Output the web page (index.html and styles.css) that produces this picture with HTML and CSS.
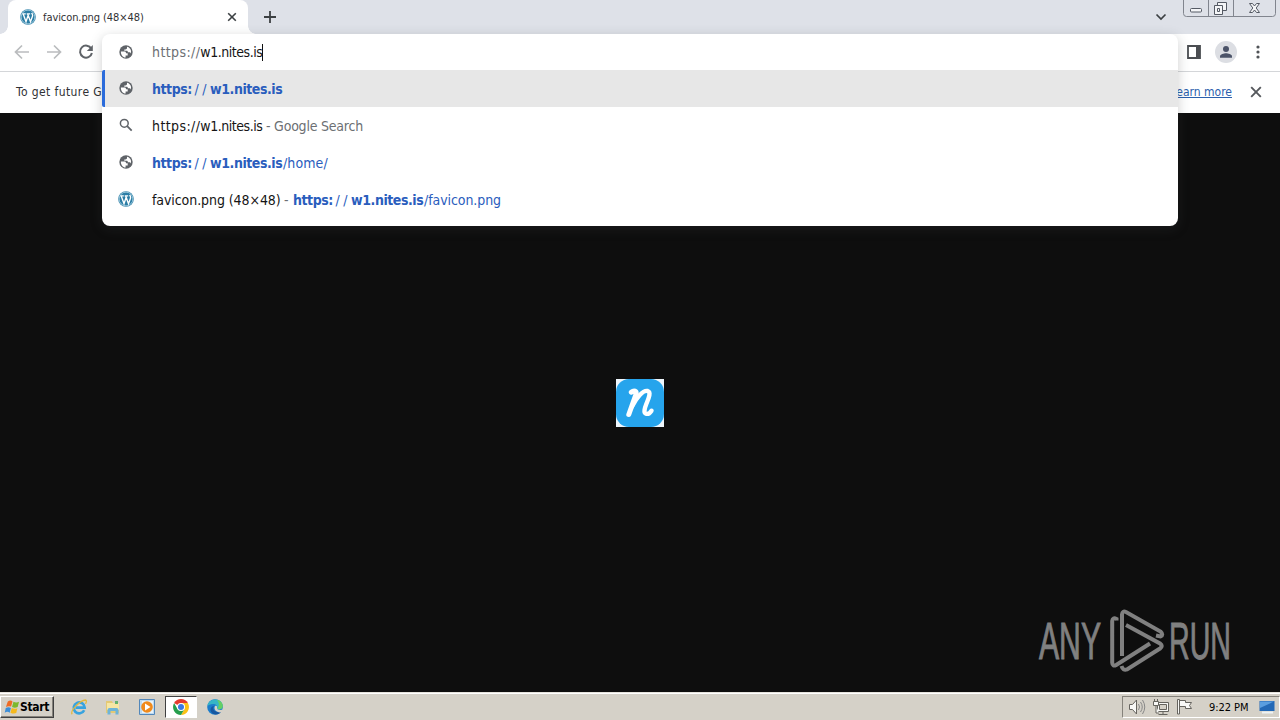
FILE: index.html
```html
<!DOCTYPE html>
<html lang="en">
<head>
<meta charset="utf-8">
<title>favicon.png (48×48)</title>
<link rel="stylesheet" href="styles.css">
</head>
<body>
<svg class="defs" width="0" height="0">
  <symbol id="globe" viewBox="0 0 16 16">
    <circle cx="8" cy="8" r="6.700" fill="#5f6368"/>
    <path d="M2.900 7.400h3.200c1.600 0 1.900.6 1.900 1.800h1.700v2.300H7.600v1.900C4.800 13.400 2.700 10.700 2.900 7.400ZM9 2.800v1.300c0 .9-.7 1.400-1.600 1.400H6.300v1.300h2.200c1 0 1.300.5 1.300 1.400h1.600c.9 0 1.300.5 1.300 1.500 1.300-3.100-.6-6.200-3.700-6.900Z" fill="#fff"/>
  </symbol>
  <symbol id="wp" viewBox="0 0 16 16">
    <circle cx="8" cy="8" r="7.800" fill="#2b7da5"/>
    <circle cx="8" cy="8" r="6.900" fill="none" stroke="#b9dcea" stroke-width=".8"/>
    <path d="M2.300 4.800h3.500M6.700 4.800h3.500M3.200 5l2.800 7.700L8 6.700M7.700 5l2.800 7.700 2-5.500c.6-1.600-.5-2-.7-3.400" fill="none" stroke="#fff" stroke-width="1.350"/>
  </symbol>
</svg>

<header class="tabstrip">
  <div class="tab">
    <svg class="i16" viewBox="0 0 16 16"><use href="#wp"/></svg>
    <span class="tab-title">favicon.png (48×48)</span>
    <svg class="tab-close" viewBox="0 0 10 10"><path d="M1.200 1.200l7.600 7.600M8.800 1.200L1.200 8.800" stroke="#3c4043" stroke-width="1.600"/></svg>
  </div>
  <svg class="newtab" viewBox="0 0 12 12"><path d="M6 0v12M0 6h12" stroke="#3c4043" stroke-width="1.800"/></svg>
  <svg class="chevron" viewBox="0 0 12 8"><path d="M1.500 1.500L6 6l4.500-4.500" fill="none" stroke="#3c4043" stroke-width="1.700"/></svg>
  <svg class="winctl" viewBox="0 0 93 18"><path d="M.5 0v13.500q0 3 3 3h86q3 0 3-3V0M25.500 0v16M50.500 0v16" fill="none" stroke="#81858e"/><g fill="#f4f5f7" stroke="#555a64"><rect x="7.500" y="8.500" width="11" height="3.500" rx="1"/><path d="M34.500 2.500h9v8h-9Z"/><path d="M31.500 5.500h8v9h-8Z"/><path d="M34.500 8.500h2v3h-2Z"/><path d="M66.500 3.500h3l2 2.500 2-2.500h3l-3.300 4.500 3.300 4.500h-3l-2-2.500-2 2.500h-3L69.800 8Z"/></g></svg>
</header>

<div class="toolbar">
  <svg class="i16" viewBox="0 0 16 16"><path d="M15 8H2M8 1.500L1.500 8 8 14.500" fill="none" stroke="#babcbe" stroke-width="1.700"/></svg>
  <svg class="i16 fwd" viewBox="0 0 16 16"><path d="M1 8h13M8 1.500L14.500 8 8 14.500" fill="none" stroke="#babcbe" stroke-width="1.700"/></svg>
  <svg class="i16 reload" viewBox="0 0 16 16"><path d="M13.300 4.700A6 6 0 1 0 13.900 9" fill="none" stroke="#5f6368" stroke-width="2"/><path d="M14.800 1v6H8.800Z" fill="#5f6368"/></svg>
  <span class="spacer"></span>
  <svg class="panel" viewBox="0 0 14 14"><path d="M1 1h12v12H1Z" fill="none" stroke="#4b4e52" stroke-width="1.800"/><path d="M9 1h4v12H9Z" fill="#4b4e52"/></svg>
  <svg class="avatar" viewBox="0 0 22 22"><circle cx="11" cy="11" r="11" fill="#dcdee3"/><circle cx="11" cy="8" r="3" fill="#4b5368"/><path d="M5 16.800v-1.500c0-2 4-3 6-3s6 1 6 3v1.500Z" fill="#4b5368"/></svg>
  <svg class="dots" viewBox="0 0 4 14"><g fill="#505357"><circle cx="2" cy="2" r="1.600"/><circle cx="2" cy="7" r="1.600"/><circle cx="2" cy="12" r="1.600"/></g></svg>
</div>

<div class="infobar">
  <span class="info-text">To get future G</span>
  <span class="spacer"></span>
  <a class="learn">Learn more</a>
  <svg class="info-close" viewBox="0 0 12 12"><path d="M1.200 1.200l9.600 9.600M10.800 1.200L1.200 10.800" stroke="#55585c" stroke-width="1.900"/></svg>
</div>

<main class="viewer">
  <svg class="nlogo" viewBox="0 0 48 48"><path d="M0 0h48v48H0Z" fill="#eef6fc"/><rect width="48" height="48" rx="13" fill="#26a4ec"/><path d="M15.200 13.200c2.800-2.200 5.800-1.500 4.700 2.300L12.800 35.500" fill="none" stroke="#fff" stroke-width="5" stroke-linecap="round" stroke-linejoin="round"/><path d="M16 27.500C20.500 18.500 27 10.800 31.700 12c3.800 1.200.7 7.800-1.300 12.800-1.500 3.900-3.200 8.900-.5 9.900 2.200.7 4.300-1 5.600-3" fill="none" stroke="#fff" stroke-width="4.400" stroke-linecap="round"/></svg>
  <div class="watermark">
    <span class="wm-text wm-any">ANY</span>
    <svg class="wm-play" viewBox="0 0 56 64"><path d="M7.500 11.500V10q-3.800-2-4.300 2v41.500q.3 4.500 4 2.500L41 34.500M13 47V5.500q.5-4 4-2.500L51.500 22.500q3.500 3.500 0 5l-4.500-1M17 16l34 18.500q3.500 2.500 0 5L18 60.500q-4 1.500-5.500-3.500" fill="none" stroke="#808080" stroke-width="4"/></svg>
    <span class="wm-text wm-run">RUN</span>
  </div>
</main>

<footer class="taskbar">
  <div class="start">
    <svg class="flag" viewBox="0 0 16 16"><path d="M3 2q3-2 5 0L6.500 7.500q-3-1-5.500.5Z" fill="#ef6b24"/><path d="M9 2.500q3 1.500 6 0L13.500 8q-3 1.500-6 0Z" fill="#7cb82d"/><path d="M.8 9q3-1.500 5.500 0L5 14q-2.500-2-5.300 0Z" fill="#3c8ed8"/><path d="M7.200 9q3 1.500 6 .2L12 14.500q-3 1-6.200-.5Z" fill="#f5b91d"/></svg>
    <b>Start</b>
  </div>
  <div class="task"><svg class="i16" viewBox="0 0 16 16"><path d="M13.200 11.200A5.500 5.500 0 1 1 13.700 8.600H4.500" fill="none" stroke="#37a3df" stroke-width="2.600"/><path d="M1.200 15.200C-1.500 12.500 9 1.200 14.500 1c1.500.3.800 2.500 0 3.800" fill="none" stroke="#e3b83c" stroke-width="1.300"/></svg></div>
  <div class="task"><svg class="i16" viewBox="0 0 16 16"><path d="M1 2h6l1 2h6v10H1Z" fill="#e4c974"/><path d="M2 4h12v7H2Z" fill="#f6e6a4"/><path d="M2.500 15.500V11q0-2 2-2h7q2 0 2 2v4.500h-3V12h-5v3.500Z" fill="#6eb4d8"/><path d="M10 2h3v3h-3Z" fill="#65b16e"/></svg></div>
  <div class="task"><svg class="i16" viewBox="0 0 16 16"><path d="M.5.500h15v15H.5Z" fill="#bddaf1" stroke="#5287ba"/><path d="M3 2h11v12H3Z" fill="#e8f3fb"/><circle cx="8" cy="8" r="5.800" fill="#f08a1c"/><path d="M6 4.500 11.500 8 6 11.500Z" fill="#fff"/></svg></div>
  <div class="task active"><svg class="i16" viewBox="0 0 16 16"><path d="M8 8 1.100 4A8 8 0 0 1 14.900 4Z" fill="#e33b2e"/><path d="M8 8V4h6.900A8 8 0 0 1 8 16l3.500-6Z" fill="#fbc116"/><path d="M8 8l3.500 2L8 16A8 8 0 0 1 1.100 4L4.500 10Z" fill="#269e4d"/><circle cx="8" cy="8" r="4" fill="#fff"/><circle cx="8" cy="8" r="3" fill="#3979e3"/></svg></div>
  <div class="task"><svg class="i16" viewBox="0 0 16 16"><circle cx="8" cy="8" r="7.800" fill="#1b7ccb"/><path d="M.5 7C1.500-2 15-1.500 15.800 6.800c0 3-3 4.500-5.800 3.200 1-3-1-5-4-5-2.500 0-4.500 1-5.500 2Z" fill="#36b5c5"/><path d="M10 .8c4 1 6 4 5.800 6.500 0 2.500-3 3.500-5.500 2.500C13 6 12 4 10 .8Z" fill="#65cf65"/><path d="M7 7c-2 3 0 7 7.500 5.500-2 3-7 4-9.500 1.500C2 11 4 7 7 7Z" fill="#1757a0"/><path d="M8 7c1.500-.5 2.500.5 2 2 0 2 3 2.500 6.500 1.500l-1.500 2.500c-2 1-4 .5-6-1C7.500 11 7 8.500 8 7Z" fill="#d5d1c8"/></svg></div>
  <span class="spacer"></span>
  <div class="tray">
    <svg class="tray-icons" viewBox="0 0 68 18"><g fill="#f8f8f6" stroke="#66645f"><path d="M1.500 6.500h3L8.500 2v14l-4-4.500h-3Z"/><path d="M10.500 6q2 3 0 6M12.500 4q3.500 5 0 10M14.500 2q4.500 7 0 14" fill="none" stroke="#888"/><path d="M29.500 4.500h11v9h-11ZM30.500 16.500h9M35 13.500v3"/><path d="M31.500 6.500h7v5h-7Z" fill="#d5d1c8"/><path d="M26.500 1v3M29.500 1v3M25.500 3.500h5v4h-5ZM28 7.500v7.500h3"/><path d="M49.500 16V1.500h2V16ZM51.500 2.500h6v2h6l-2 3 2 3h-6v-2h-6Z"/></g></svg>
    <time class="clock">9:22 PM</time>
    <svg class="i16 desk" viewBox="0 0 16 16"><path d="M.5 2h15v10H.5Z" fill="#2469b6"/><path d="M1 2.500h14L1 9Z" fill="#5a9ee0"/><path d="M3 13.500h11" stroke="#edf2f5" stroke-width="2"/></svg>
  </div>
</footer>

<section class="omnibox">
  <div class="row input"><svg class="i16" viewBox="0 0 16 16"><use href="#globe"/></svg><span class="t t-input"><span class="grey scheme">https://</span>w1.nites.is</span><i class="caret"></i></div>
  <div class="row selected"><svg class="i16" viewBox="0 0 16 16"><use href="#globe"/></svg><b class="t url w130">https:<span class="thin">//</span>w1.nites.is</b></div>
  <div class="row"><svg class="i16" viewBox="0 0 16 16"><circle cx="6.300" cy="6.300" r="3.900" fill="none" stroke="#5f6368" stroke-width="1.500"/><path d="M9.200 9.200l4.500 4.500" stroke="#5f6368" stroke-width="1.800"/></svg><span class="t t-search"><span class="scheme">https://</span>w1.nites.is</span><span class="t grey t-google">- Google Search</span></div>
  <div class="row"><svg class="i16" viewBox="0 0 16 16"><use href="#globe"/></svg><b class="t url w130">https:<span class="thin">//</span>w1.nites.is</b><span class="t url t-home">/home/</span></div>
  <div class="row"><svg class="i16" viewBox="0 0 16 16"><use href="#wp"/></svg><span class="t t-fav">favicon.png (48×48)</span><span class="t grey t-dash">-</span><b class="t url w130">https:<span class="thin">//</span>w1.nites.is</b><span class="t url t-path">/favicon.png</span></div>
</section>
</body>
</html>
```
FILE: styles.css
```css
* { box-sizing: border-box; }
body { margin: 0; width: 1280px; height: 720px; overflow: hidden; display: flex; flex-direction: column; background: #0e0e0e; font-family: "DejaVu Sans Condensed", "DejaVu Sans", sans-serif; font-stretch: condensed; font-size: 11px; color: #303134; }
svg { display: block; flex: none; overflow: visible; }
.defs { position: absolute; }
.i16 { width: 16px; height: 16px; }
.spacer { flex: 1; }

.tabstrip { height: 34px; flex: none; display: flex; align-items: flex-start; background: #dee1e8; }
.tab { position: relative; width: 240px; height: 34px; margin-left: 8px; padding: 0 11px 0 12px; display: flex; align-items: center; background: #fff; border-radius: 8px 8px 0 0; }
.tab::before, .tab::after { content: ""; position: absolute; bottom: 0; width: 8px; height: 8px; }
.tab::before { left: -8px; background: radial-gradient(circle at 0 0, transparent 7.5px, #fff 8px); }
.tab::after { right: -8px; background: radial-gradient(circle at 100% 0, transparent 7.5px, #fff 8px); }
.tab-title { margin-left: 7px; white-space: nowrap; letter-spacing: -.08px; }
.tab-close { width: 10px; height: 10px; margin-left: auto; }
.newtab { width: 12px; height: 12px; margin: 11px 0 0 16px; }
.chevron { width: 12px; height: 8px; margin: 13px 16px 0 auto; }
.winctl { width: 93px; height: 18px; margin-right: 4px; }

.toolbar { height: 38px; flex: none; display: flex; align-items: center; padding: 0 20px 1px 14px; background: #fff; border-bottom: 1px solid #d4d6d9; }
.fwd, .reload { margin-left: 16px; }
.panel { width: 14px; height: 14px; margin-right: 14px; }
.avatar { width: 22px; height: 22px; margin-right: 19px; }
.dots { width: 4px; height: 14px; }

.infobar { height: 41px; flex: none; display: flex; align-items: center; padding: 0 18px 2px 16px; background: #fff; font-size: 12px; }
.info-text { letter-spacing: .4px; }
.learn { color: #2b60ad; text-decoration: underline; letter-spacing: 0; margin-right: 18px; }
.info-close { width: 12px; height: 12px; }

.viewer { position: relative; flex: 1; display: flex; align-items: center; justify-content: center; background: #0e0e0e; }
.nlogo { width: 48px; height: 48px; }
.watermark { position: absolute; left: 1039px; top: 496px; height: 64px; width: 194px; display: flex; align-items: center; color: #808080; }
.wm-text { font-family: "Liberation Sans", sans-serif; font-size: 52px; line-height: 64px; white-space: nowrap; transform-origin: 0 50%; -webkit-text-stroke: 1px #808080; }
.wm-any { width: 70px; transform: scaleX(.58); }
.wm-play { width: 56px; height: 64px; }
.wm-run { width: 62px; margin-left: 4px; transform: scaleX(.55); }

.taskbar { height: 28px; flex: none; display: flex; align-items: center; padding: 1px 0 0; background: #d5d1c8; border-top: 1px solid #e6e3dc; box-shadow: inset 0 1px #fff; color: #000; }
.start { width: 54px; height: 22px; display: flex; align-items: center; padding-left: 4px; margin-right: 9px; border: 1px solid; border-color: #fff #404040 #404040 #fff; box-shadow: inset -1px -1px #85827b; }
.start b { font-size: 12px; letter-spacing: -.3px; }
.flag { width: 15px; height: 16px; }
.task { width: 32px; height: 22px; margin-right: 2px; display: flex; align-items: center; justify-content: center; }
.active { background: #fff; border: 1px solid; border-color: #404040 #fff #fff #404040; }
.tray { width: 158px; height: 22px; display: flex; align-items: center; padding: 0 4px 0 5px; border: 1px solid; border-color: #85827b #fff #fff #85827b; }
.tray-icons { width: 68px; height: 18px; }
.clock { margin-left: 13px; letter-spacing: -.05px; white-space: nowrap; }
.desk { margin-left: auto; }

.omnibox { position: absolute; left: 102px; top: 34px; width: 1076px; height: 192px; background: #fff; border-radius: 8px; box-shadow: 0 3px 12px rgba(60,64,67,.25); font-size: 14px; }
.row { height: 37px; display: flex; align-items: center; padding-left: 16px; }
.row.input { height: 36px; }
.row .i16 { margin-right: 18px; margin-bottom: 1px; }
.selected { background: #e7e7e7; border-left: 3px solid #2a6bdb; border-radius: 2px 0 0 2px; padding-left: 13px; }
.t { white-space: nowrap; color: #151515; flex: none; }
.grey, .t.grey { color: #6c6f73; }
.scheme { letter-spacing: .4px; }
.t.url { color: #2a5dbd; }
.thin { font-weight: normal; letter-spacing: 3.6px; }
.w130 { width: 131px; letter-spacing: -.45px; word-spacing: 0; }
.w130 .thin { margin-left: 2.500px; }
.t-input, .t-search { width: 110px; letter-spacing: -.46px; }
.caret { width: 1px; height: 17px; background: #111; }
.t-google { margin-left: 4px; letter-spacing: -.22px; }
.t-home { letter-spacing: .1px; }
.t-fav { width: 128px; letter-spacing: -.08px; }
.t-dash { width: 13px; padding-left: 4px; }
.t-path { letter-spacing: -.08px; }
```
